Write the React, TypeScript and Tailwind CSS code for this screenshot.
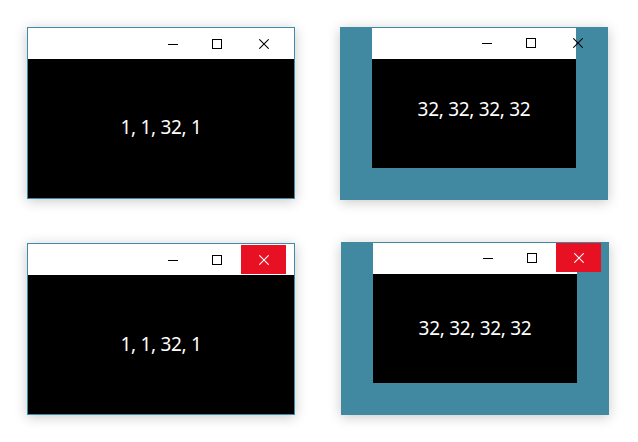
import React from 'react';

type Props = {
  label: string;
  extended?: boolean;
  hover?: boolean;
  className?: string;
  textClass?: string;
};

function MinIcon() {
  return (
    <svg width="10" height="10" viewBox="0 0 10 10" shapeRendering="crispEdges">
      <path d="M0 5.5H10" stroke="#000" strokeWidth="1" />
    </svg>
  );
}

function MaxIcon() {
  return (
    <svg width="10" height="10" viewBox="0 0 10 10" shapeRendering="crispEdges">
      <rect x="0.5" y="0.5" width="9" height="9" fill="none" stroke="#000" strokeWidth="1" />
    </svg>
  );
}

function CloseIcon({ color }: { color: string }) {
  return (
    <svg width="10" height="10" viewBox="0 0 10 10">
      <path d="M0.3 0.3L9.7 9.7M9.7 0.3L0.3 9.7" stroke={color} strokeWidth="1.05" />
    </svg>
  );
}

function CaptionButtons({ hover }: { hover?: boolean }) {
  return (
    <div className="absolute top-[1px] right-[8px] flex h-[29px]">
      <div className="flex w-[45px] items-center justify-center">
        <MinIcon />
      </div>
      <div className="flex w-[46px] items-center justify-center pr-[2px]">
        <MaxIcon />
      </div>
      <div
        className={`flex w-[45px] items-center justify-center ${hover ? 'bg-[#e81123]' : ''}`}
      >
        <CloseIcon color={hover ? '#fff' : '#000'} />
      </div>
    </div>
  );
}

const labelFont = { fontFamily: '"Noto Sans", "Open Sans", sans-serif' };

function Window({ label, extended, hover, className = '', textClass = '' }: Props) {
  if (extended) {
    // frame extended 32px into the client area, so the teal frame shows round it
    return (
      <div
        className={`relative flex h-[173px] w-[268px] flex-col bg-[#4188a1] px-[32px] pt-[1px] pb-[32px] shadow-[0_2px_12px_rgba(0,0,0,0.22)] ${className}`}
      >
        <div className="h-[31px] bg-white" />
        <div
          className={`flex flex-1 justify-center bg-black text-[19px] tracking-[-0.3px] text-white ${textClass}`}
          style={labelFont}
        >
          {label}
        </div>
        <CaptionButtons hover={hover} />
      </div>
    );
  }

  return (
    <div
      className={`relative flex h-[172px] w-[268px] flex-col border border-[#3f8ba9] shadow-[0_2px_12px_rgba(0,0,0,0.22)] ${className}`}
    >
      <div className="h-[31px] bg-white" />
      <div
        className={`flex flex-1 justify-center bg-black text-[19px] tracking-[-0.3px] text-white ${textClass}`}
        style={labelFont}
      >
        {label}
      </div>
      <CaptionButtons hover={hover} />
    </div>
  );
}

export default function App() {
  return (
    <div className="h-[442px] w-[638px] bg-white pt-[27px] pl-[27px]">
      <div className="grid grid-cols-[268px_268px] gap-x-[45px] gap-y-[42px]">
        <Window label="1, 1, 32, 1" textClass="items-center pb-[2px]" />
        <Window label="32, 32, 32, 32" extended textClass="items-center pb-[9px]" />
        <Window label="1, 1, 32, 1" hover className="mt-[1px]" textClass="items-center" />
        <Window label="32, 32, 32, 32" extended hover className="ml-[1px]" textClass="items-center" />
      </div>
    </div>
  );
}
